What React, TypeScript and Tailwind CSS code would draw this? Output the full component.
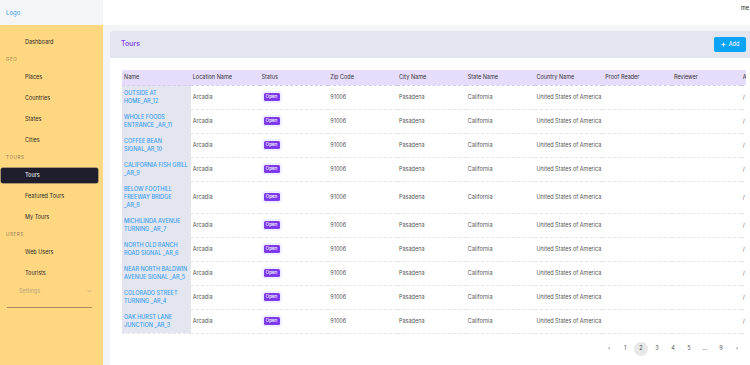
import React from "react";

const rows = [
  "OUTSIDE AT HOME_AR_12",
  "WHOLE FOODS ENTRANCE _AR_11",
  "COFFEE BEAN SIGNAL_AR_10",
  "CALIFORNIA FISH GRILL _AR_9",
  "BELOW FOOTHILL FREEWAY BRIDGE _AR_8",
  "MICHILINDA AVENUE TURNING _AR_7",
  "NORTH OLD RANCH ROAD SIGNAL _AR_6",
  "NEAR NORTH BALDWIN AVENUE SIGNAL _AR_5",
  "COLORADO STREET TURNING _AR_4",
  "OAK HURST LANE JUNCTION _AR_3",
];

const headers = [
  "Name",
  "Location Name",
  "Status",
  "Zip Code",
  "City Name",
  "State Name",
  "Country Name",
  "Proof Reader",
  "Reviewer",
  "Actions",
];

type NavEntry = { type: "item" | "label"; text: string; active?: boolean };

const nav: NavEntry[] = [
  { type: "item", text: "Dashboard" },
  { type: "label", text: "GEO" },
  { type: "item", text: "Places" },
  { type: "item", text: "Countries" },
  { type: "item", text: "States" },
  { type: "item", text: "Cities" },
  { type: "label", text: "TOURS" },
  { type: "item", text: "Tours", active: true },
  { type: "item", text: "Featured Tours" },
  { type: "item", text: "My Tours" },
  { type: "label", text: "USERS" },
  { type: "item", text: "Web Users" },
  { type: "item", text: "Tourists" },
];

const cell = "pl-[2px] align-middle text-[5.5px] leading-[8px] text-[#555]";

export default function App() {
  return (
    <div
      className="flex h-[365px] w-[750px] overflow-hidden bg-white text-[#333]"
      style={{ fontFamily: "Inter, 'Liberation Sans', sans-serif" }}
    >
      {/* Sidebar */}
      <aside className="flex w-[103px] shrink-0 flex-col">
        <div className="flex h-[25px] items-center bg-[#f4f5f7] pl-[6px] text-[6px] text-[#3b9bef]">
          Logo
        </div>
        <div className="flex flex-1 flex-col bg-[#ffd780] pr-[5px] pt-[7px]">
          {nav.map((n, i) =>
            n.type === "label" ? (
              <div
                key={i}
                className="flex h-[14px] items-center pl-[6px] text-[4.5px] tracking-[0.14em] text-[#8d7c5a]"
              >
                {n.text}
              </div>
            ) : (
              <div key={i} className="h-[21px] py-[3px] pl-[1px]">
                <div
                  className={
                    "flex h-[15px] items-center rounded-[2px] pl-[24px] text-[5.5px] " +
                    (n.active
                      ? "bg-[#1e1e2d] text-white shadow-[0_0_0_0.5px_#555]"
                      : "text-[#2b2b2b]")
                  }
                >
                  {n.text}
                </div>
              </div>
            )
          )}
          <div className="flex h-[14px] items-center justify-between pl-[19px] pr-[6px] text-[5.5px] text-[#b3a480]">
            <span>Settings</span>
            <svg width="5" height="4" viewBox="0 0 10 6" fill="none">
              <path d="M1 1l4 4 4-4" stroke="#b3a480" strokeWidth="1.2" />
            </svg>
          </div>
          <div className="mt-[9px] ml-[7px] mr-[6px] h-[1px] bg-[#a68c5a]" />
        </div>
      </aside>

      {/* Main */}
      <main className="flex min-w-0 flex-1 flex-col">
        <header className="flex h-[25px] shrink-0 items-start justify-end bg-white pt-[4px] text-[5.5px] text-[#222]">
          <span className="mr-[1px]">me</span>
        </header>
        <div className="flex min-h-0 flex-1 flex-col bg-[#f3f4f6] pl-[7px] pt-[6px]">
          <section className="flex min-h-0 flex-1 flex-col overflow-hidden rounded-tl-[3px] bg-white">
            <div className="flex h-[27px] shrink-0 items-center justify-between bg-[#e3e6ef] pl-[11px] pr-[4px]">
              <h1 className="text-[7px] font-medium text-[#7c3aed]">Tours</h1>
              <button className="flex h-[15px] w-[32px] items-center justify-center gap-[3px] rounded-[2px] bg-[#0aa3f5] text-[5.5px] text-white">
                <svg width="5" height="5" viewBox="0 0 10 10">
                  <path d="M5 1v8M1 5h8" stroke="white" strokeWidth="1.6" />
                </svg>
                Add
              </button>
            </div>
            <div className="flex flex-1 flex-col pl-[12px] pr-[4px] pt-[12px]">
              <div className="overflow-hidden">
                <table className="table-fixed border-collapse text-left" style={{ width: 687.5 }}>
                  <thead>
                    <tr className="h-[15px] bg-[#e6dcfb] border-b border-dashed border-[#d4ccf0]">
                      {headers.map((h) => (
                        <th
                          key={h}
                          className="w-[68.75px] whitespace-nowrap pl-[2px] align-middle text-[5.5px] font-normal leading-[8px] text-[#333]"
                        >
                          {h}
                        </th>
                      ))}
                    </tr>
                  </thead>
                  <tbody>
                    {rows.map((r) => (
                      <tr key={r} className="border-b border-dashed border-[#e4e6ec]">
                        <td className="bg-[#e3e6ef] py-[3.5px] pl-[2px] pr-[3px] align-middle text-[5.5px] font-medium leading-[8px] text-[#3aa0f0]">
                          {r}
                        </td>
                        <td className={cell}>Arcadia</td>
                        <td className="pl-[4px] align-middle text-[5.5px] leading-[8px]">
                          <span className="flex h-[8px] w-[16px] items-center justify-center rounded-[1.5px] bg-[#7c3aed] text-[4.5px] font-medium leading-[8px] text-white ring-2 ring-[#f3eefe]">
                            Open
                          </span>
                        </td>
                        <td className={cell}>91006</td>
                        <td className={cell}>Pasadena</td>
                        <td className={cell}>California</td>
                        <td className={cell + " whitespace-nowrap"}>United States of America</td>
                        <td className={cell} />
                        <td className={cell} />
                        <td className={cell}>/</td>
                      </tr>
                    ))}
                  </tbody>
                </table>
              </div>
              <nav className="mt-[8px] flex items-center justify-end pr-[2px] text-[5.5px] text-[#555]">
                {["‹", "1", "2", "3", "4", "5", "…", "9", "›"].map((p, i) => (
                  <span
                    key={i}
                    className={
                      "flex h-[14px] w-[14px] items-center justify-center rounded-full " +
                      (i === 8 ? "" : "mr-[2px] ") +
                      (p === "2" ? "bg-[#e8e8ea] font-medium" : "")
                    }
                  >
                    {p}
                  </span>
                ))}
              </nav>
            </div>
          </section>
        </div>
      </main>
    </div>
  );
}
